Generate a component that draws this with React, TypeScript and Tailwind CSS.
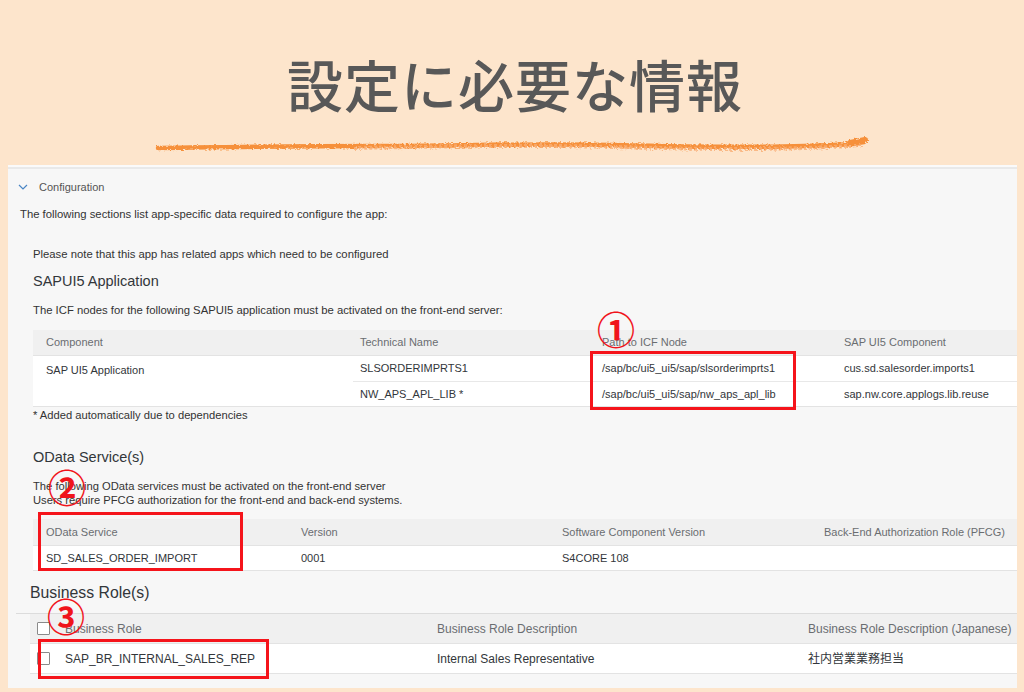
import React from "react";

const Box = ({ cls }: { cls: string }) => (
  <div className={`absolute border-[3px] border-[#f5141b] ${cls}`} />
);

const Num = ({ cls, ch }: { cls: string; ch: string }) => (
  <div
    className={`absolute text-[#f0141b] text-[38px] leading-none font-bold ${cls}`}
    style={{ fontFamily: '"Noto Sans CJK JP", sans-serif' }}
  >
    {ch}
  </div>
);

export default function App() {
  const sans = { fontFamily: '"Liberation Sans", Arial, sans-serif' };
  return (
    <div
      className="relative w-[1024px] h-[692px] bg-[#fde5cc] overflow-hidden flex flex-col"
      style={sans}
    >
      {/* Title area */}
      <div className="h-[165px] flex flex-col items-center">
        <div
          className="mt-[53px] h-[60px] leading-[60px] text-[56px] text-[#585858] tracking-[1px] font-medium ml-[6px]"
          style={{ fontFamily: '"Noto Sans CJK JP", sans-serif' }}
        >
          設定に必要な情報
        </div>
        <svg width="716" height="24" viewBox="0 0 716 24" className="mt-[22px] -mb-[2px] ml-[0px]">
          <defs>
            <filter id="rough" x="-5%" y="-50%" width="110%" height="200%">
              <feTurbulence type="fractalNoise" baseFrequency="0.4 1.1" numOctaves="2" seed="4" />
              <feDisplacementMap in="SourceGraphic" scale="4" />
            </filter>
          </defs>
          <g filter="url(#rough)">
            <path
              d="M4 13 C 80 12, 140 11, 220 11 S 380 8, 460 10 S 590 13, 650 11 S 700 9, 710 7"
              stroke="#f6903a"
              strokeWidth="4.5"
              fill="none"
              strokeLinecap="round"
            />
            <path
              d="M200 13 C 300 11, 380 10, 460 12 S 590 15, 650 13 S 700 10, 708 9"
              stroke="#f9ae74"
              strokeWidth="4"
              fill="none"
              strokeDasharray="3 2"
              opacity="0.8"
            />
            <path d="M696 8 L 711 5" stroke="#f6903a" strokeWidth="6" strokeLinecap="round" />
          </g>
        </svg>
      </div>

      {/* Panel */}
      <div className="ml-[8px] mr-[7px] h-[523px] bg-[#f7f7f7] flex flex-col text-[#32363a]">
        <div className="h-[2px] bg-[#fafafa]" />
        <div className="h-[2px] bg-[#e9e9e9]" />

        {/* Configuration */}
        <div className="mt-[8px] h-[20px] flex items-center text-[11px] text-[#555]">
          <svg width="10" height="8" viewBox="0 0 10 8" className="ml-[10px]">
            <path d="M1 2 L5 6 L9 2" stroke="#4a86c5" strokeWidth="1.2" fill="none" />
          </svg>
          <span className="ml-[11px]">Configuration</span>
        </div>

        <div className="mt-[7px] h-[20px] leading-[20px] ml-[12px] text-[11.3px] text-[#333]">
          The following sections list app-specific data required to configure the app:
        </div>

        <div className="mt-[20px] h-[20px] leading-[20px] ml-[25px] text-[11.3px] text-[#333]">
          Please note that this app has related apps which need to be configured
        </div>

        <div className="mt-[6px] h-[22px] leading-[22px] ml-[25px] text-[14.5px] text-[#32363a]">
          SAPUI5 Application
        </div>

        <div className="mt-[8px] h-[20px] leading-[20px] ml-[25px] text-[11.3px] text-[#333]">
          The ICF nodes for the following SAPUI5 application must be activated on the front-end server:
        </div>

        {/* Table 1 */}
        <div className="mt-[10px] ml-[25px] text-[11px]">
          <div className="h-[26px] bg-[#f0f0f0] border-b border-[#e3e3e3] grid grid-cols-[314px_242px_242px_1fr] items-center text-[#6a6d70]">
            <div className="pl-[13px]">Component</div>
            <div className="pl-[13px]">Technical Name</div>
            <div className="pl-[13px]">Path to ICF Node</div>
            <div className="pl-[13px]">SAP UI5 Component</div>
          </div>
          <div className="bg-white border-b border-[#e3e3e3] flex text-[#32363a]">
            <div className="w-[320px] pl-[13px] pt-[6px]">SAP UI5 Application</div>
            <div className="flex-1 flex flex-col">
              <div className="h-[26px] border-b border-[#e8e8e8] grid grid-cols-[236px_242px_1fr] items-center">
                <div className="pl-[7px]">SLSORDERIMPRTS1</div>
                <div className="pl-[13px]">/sap/bc/ui5_ui5/sap/slsorderimprts1</div>
                <div className="pl-[13px]">cus.sd.salesorder.imports1</div>
              </div>
              <div className="h-[24px] grid grid-cols-[236px_242px_1fr] items-center">
                <div className="pl-[7px]">NW_APS_APL_LIB *</div>
                <div className="pl-[13px]">/sap/bc/ui5_ui5/sap/nw_aps_apl_lib</div>
                <div className="pl-[13px]">sap.nw.core.applogs.lib.reuse</div>
              </div>
            </div>
          </div>
        </div>

        <div className="h-[16px] leading-[16px] ml-[25px] text-[11.2px] text-[#333]">
          * Added automatically due to dependencies
        </div>

        <div className="mt-[23px] h-[22px] leading-[22px] ml-[25px] text-[14.5px] text-[#32363a]">
          OData Service(s)
        </div>

        <div className="mt-[11px] ml-[25px] text-[11.2px] leading-[14px] text-[#333]">
          <div>The following OData services must be activated on the front-end server</div>
          <div>Users require PFCG authorization for the front-end and back-end systems.</div>
        </div>

        {/* Table 2 */}
        <div className="mt-[12px] ml-[25px] text-[11px]">
          <div className="h-[27px] bg-[#f0f0f0] border-b border-[#e3e3e3] grid grid-cols-[255px_261px_262px_1fr] items-center text-[#6a6d70]">
            <div className="pl-[13px]">OData Service</div>
            <div className="pl-[13px]">Version</div>
            <div className="pl-[13px]">Software Component Version</div>
            <div className="pl-[13px]">Back-End Authorization Role (PFCG)</div>
          </div>
          <div className="h-[25px] bg-white border-b border-[#e3e3e3] grid grid-cols-[255px_261px_262px_1fr] items-center text-[#32363a]">
            <div className="pl-[13px]">SD_SALES_ORDER_IMPORT</div>
            <div className="pl-[13px]">0001</div>
            <div className="pl-[13px]">S4CORE 108</div>
            <div />
          </div>
        </div>

        <div className="mt-[11px] h-[22px] leading-[22px] ml-[22px] text-[15.8px] text-[#32363a]">
          Business Role(s)
        </div>

        {/* Table 3 */}
        <div className="mt-[9px] ml-[8px] border-t border-[#dcdcdc] text-[12px]">
          <div className="ml-[14px] h-[30px] bg-[#f0f0f0] border-b border-[#e3e3e3] grid grid-cols-[407px_371px_1fr] items-center text-[#6a6d70]">
            <div className="flex items-center">
              <div className="ml-[7px] w-[13px] h-[13px] border border-[#8a8a8a] bg-white rounded-[1px]" />
              <span className="ml-[15px]">Business Role</span>
            </div>
            <div>Business Role Description</div>
            <div>Business Role Description (Japanese)</div>
          </div>
          <div className="ml-[14px] h-[30px] bg-white border-b border-[#e3e3e3] grid grid-cols-[407px_371px_1fr] items-center text-[#32363a]">
            <div className="flex items-center">
              <div className="ml-[7px] w-[13px] h-[13px] border border-[#8a8a8a] bg-white rounded-[1px]" />
              <span className="ml-[15px] text-[12px]">SAP_BR_INTERNAL_SALES_REP</span>
            </div>
            <div>Internal Sales Representative</div>
            <div style={{ fontFamily: '"Liberation Sans", "Noto Sans CJK JP", sans-serif' }}>社内営業業務担当</div>
          </div>
        </div>
      </div>

      {/* Annotations */}
      <Box cls="left-[590px] top-[351px] w-[206px] h-[59px]" />
      <Box cls="left-[38px] top-[512px] w-[205px] h-[59px]" />
      <Box cls="left-[38px] top-[639px] w-[231px] h-[40px]" />
      <Num cls="left-[597px] top-[309px]" ch="①" />
      <Num cls="left-[48px] top-[467px]" ch="②" />
      <Num cls="left-[47px] top-[596px]" ch="③" />
    </div>
  );
}
